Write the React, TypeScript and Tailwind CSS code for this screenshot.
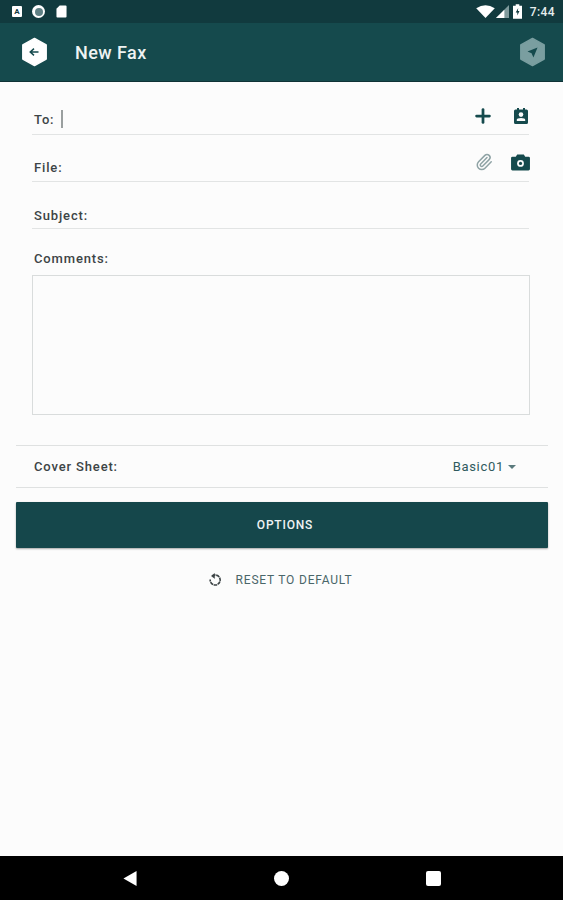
import { Paperclip, Plus } from 'lucide-react';

const font = { fontFamily: 'Roboto, sans-serif' };

const Hexagon = ({ className }: { className: string }) => (
  <svg viewBox="0 0 28 32" className={className} fill="currentColor">
    <path d="M14 1.5 26.5 8.5V23.5L14 30.5 1.5 23.5V8.5Z" stroke="currentColor" strokeWidth="1.5" strokeLinejoin="round" />
  </svg>
);

const StatusBar = () => (
  <div className="flex h-[23px] items-center justify-between bg-[#113a3e] pl-[12px] pr-[8px]">
    <div className="flex items-center gap-[10px]">
      <div className="flex h-[11px] w-[10px] items-center justify-center rounded-[1px] bg-white text-[8px] font-bold leading-none text-[#113a3e]">
        A
      </div>
      <div className="flex h-[13px] w-[13px] items-center justify-center rounded-full bg-white">
        <div className="h-[8px] w-[8px] rounded-full bg-[#5f8084]" />
      </div>
      <svg viewBox="0 0 12 14" className="ml-[1px] h-[13px] w-[11px]" fill="white">
        <path d="M4 0.5H10.5Q11.5 0.5 11.5 1.5V12.5Q11.5 13.5 10.5 13.5H1.5Q0.5 13.5 0.5 12.5V4Z" />
      </svg>
    </div>
    <div className="flex items-center">
      <svg viewBox="0 0 20 14" className="h-[13px] w-[19px]" fill="white">
        <path d="M0 3.5Q10 -3 20 3.5L10 14Z" />
      </svg>
      <svg viewBox="0 0 14 14" className="ml-[1px] h-[13px] w-[13px]">
        <path d="M14 0V14H0Z" fill="#7f9a9c" />
        <path d="M9 5V14H0Z" fill="white" />
      </svg>
      <svg viewBox="0 0 10 16" className="ml-[4px] h-[15px] w-[9px]">
        <path d="M3 0H7V1.5H10V16H0V1.5H3Z" fill="white" />
        <path d="M5.8 4 3 9H4.8V12.5L7.2 7.5H5.4Z" fill="#113a3e" />
      </svg>
      <span className="ml-[8px] text-[12px] font-medium leading-none tracking-[0.4px] text-[#e6eded]" style={font}>
        7:44
      </span>
    </div>
  </div>
);

const Header = () => (
  <div className="flex h-[59px] items-center justify-between border-b border-[#0f3236] bg-[#154a4d] pl-[21px] pr-[17px]">
    <div className="flex items-center">
      <div className="relative h-[30px] w-[27px] text-white">
        <Hexagon className="h-[30px] w-[27px]" />
        <svg viewBox="0 0 16 16" className="absolute left-[7px] top-[9px] h-[12px] w-[12px]" fill="none" stroke="#154a4d">
          <path d="M14 8H3M8 3.5 3 8l5 4.5" strokeWidth="2" />
        </svg>
      </div>
      <span className="ml-[27px] mt-[2px] text-[18px] font-medium leading-none tracking-[0.45px] text-[#eef3f3]" style={font}>
        New Fax
      </span>
    </div>
    <div className="relative h-[30px] w-[27px] text-[#7a9ea0]">
      <Hexagon className="h-[30px] w-[27px]" />
      <svg viewBox="0 0 12 12" className="absolute left-[8px] top-[10px] h-[11px] w-[11px]" fill="#154a4d">
        <path d="M11.5 0.5 0.5 5 5 6.8 7 11.5Z" />
      </svg>
    </div>
  </div>
);

const ContactIcon = () => (
  <svg viewBox="0 0 14 16" className="h-[16px] w-[14px]" fill="#154a4d">
    <path d="M1.5 1.5H3V0H5V1.5H9V0H11V1.5H12.5Q14 1.5 14 3V14.5Q14 16 12.5 16H1.5Q0 16 0 14.5V3Q0 1.5 1.5 1.5Z" />
    <circle cx="7" cy="6.6" r="2.3" fill="#fcfcfc" />
    <path d="M2.8 13V11.8Q2.8 10 7 10 11.2 10 11.2 11.8V13Z" fill="#fcfcfc" />
  </svg>
);

const CameraIcon = () => (
  <svg viewBox="0 0 20 18" className="h-[17px] w-[19px]">
    <path d="M6.5 0.5H13.5L15 2.8H18.5Q20 2.8 20 4.3V16Q20 17.5 18.5 17.5H1.5Q0 17.5 0 16V4.3Q0 2.8 1.5 2.8H5Z" fill="#154a4d" />
    <circle cx="10" cy="10" r="3.6" fill="#fcfcfc" />
    <circle cx="10" cy="10" r="1.7" fill="#154a4d" />
  </svg>
);

const FieldLabel = ({ children }: { children: string }) => (
  <span className="text-[13px] font-medium leading-none tracking-[0.85px] text-[#3d4446]" style={font}>
    {children}
  </span>
);

const Form = () => (
  <div className="pl-[32px] pr-[34px] pt-[26px]">
    <div className="flex h-[27px] items-start justify-between border-b border-[#e2e4e4] pl-[2px]">
      <div className="flex items-center pt-[2px]">
        <FieldLabel>To:</FieldLabel>
        <div className="ml-[7px] h-[18px] w-[2px] bg-[#9a9f9f]" />
      </div>
      <div className="-mt-[3px] flex items-center">
        <Plus className="h-[22px] w-[22px] text-[#154a4d]" strokeWidth={3} />
        <div className="ml-[20px] mr-[1px]">
          <ContactIcon />
        </div>
      </div>
    </div>
    <div className="mt-[19px] flex h-[28px] items-center justify-between border-b border-[#e2e4e4] pl-[2px]">
      <div className="flex h-[14px] items-center -mt-[1px]">
        <FieldLabel>File:</FieldLabel>
      </div>
      <div className="-mt-[11px] flex items-center">
        <Paperclip className="h-[18px] w-[18px] text-[#8fa3a5]" strokeWidth={2} />
        <div className="ml-[18px] -mr-[1px]">
          <CameraIcon />
        </div>
      </div>
    </div>
    <div className="mt-[27px] flex h-[20px] items-start border-b border-[#e2e4e4] pl-[2px]">
      <FieldLabel>Subject:</FieldLabel>
    </div>
    <div className="mt-[22px] pl-[2px]">
      <div className="flex h-[14px] items-center">
        <FieldLabel>Comments:</FieldLabel>
      </div>
    </div>
    <div className="-mr-[1px] mt-[10px] h-[140px] border border-[#d9dcdc]" />
  </div>
);

const Options = () => (
  <div className="pl-[16px] pr-[15px] pt-[30px]">
    <div className="flex h-[43px] items-center justify-between border-y border-[#dfe1e1] pl-[18px] pr-[32px]">
      <FieldLabel>Cover Sheet:</FieldLabel>
      <div className="flex items-center">
        <span className="text-[13px] leading-none tracking-[0.7px] text-[#2f5a5e]" style={font}>
          Basic01
        </span>
        <div className="ml-[4px] h-0 w-0 border-x-[4px] border-t-[4px] border-x-transparent border-t-[#5b7a7d]" />
      </div>
    </div>
    <button className="mt-[14px] flex h-[46px] w-full items-center justify-center rounded-[1px] bg-[#15474b] pl-[6px] text-[12px] font-medium tracking-[0.8px] text-[#eef3f3] shadow-[0_1px_2px_rgba(0,0,0,0.35)]" style={font}>
      OPTIONS
    </button>
    <div className="mt-[25px] flex items-center justify-center pr-[4px]">
      <svg viewBox="0 0 14 14" className="h-[14px] w-[14px]" fill="none" stroke="#3b4244" strokeWidth="1.6">
        <path d="M4.2 3A5 5 0 1 1 2.2 6.5" strokeDasharray="3.5 0.6" />
        <path d="M6.6 0.4 3.4 3l3.2 2.4Z" fill="#3b4244" strokeWidth="0.4" />
      </svg>
      <span className="ml-[14px] text-[12px] leading-none tracking-[0.8px] text-[#4a6669]" style={font}>
        RESET TO DEFAULT
      </span>
    </div>
  </div>
);

const NavBar = () => (
  <div className="flex h-[44px] items-center bg-black pl-[123px] pr-[122px]">
    <div className="flex w-full items-center justify-between">
      <svg viewBox="0 0 14 16" className="h-[15px] w-[14px]" fill="white">
        <path d="M14 0V16L0 8Z" />
      </svg>
      <div className="h-[15px] w-[15px] rounded-full bg-white" />
      <div className="h-[15px] w-[15px] rounded-[2px] bg-white" />
    </div>
  </div>
);

export default function App() {
  return (
    <div className="flex h-[900px] w-[563px] flex-col bg-[#fcfcfc]" style={font}>
      <StatusBar />
      <Header />
      <div className="flex-1">
        <Form />
        <Options />
      </div>
      <NavBar />
    </div>
  );
}
